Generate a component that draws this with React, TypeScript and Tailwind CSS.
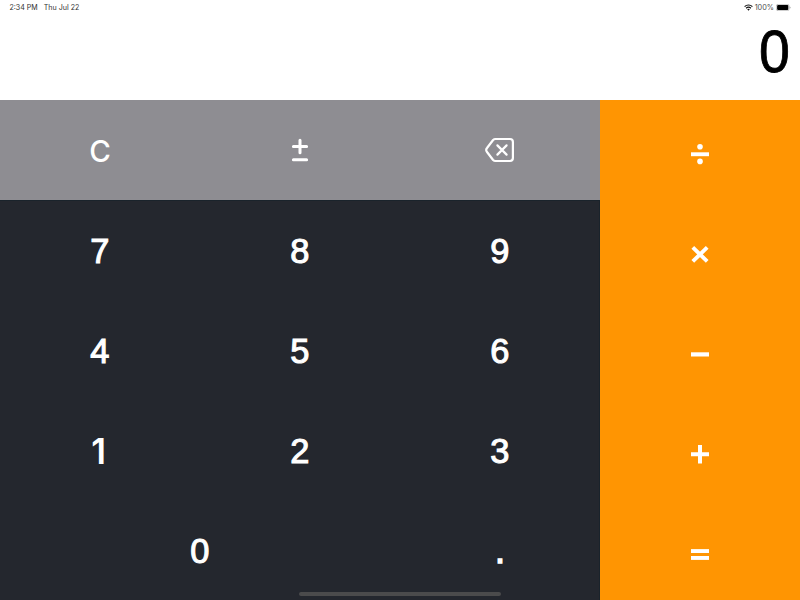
import type { ReactNode } from "react";

const FACES: Record<string, string> = {
  "1": "font-['Inter',sans-serif] text-[36px] font-semibold pt-px pr-[3px]",
  ".": "text-[35px] [-webkit-text-stroke:1.7px_white]",
};

function Digit({ label, wide = false }: { label: string; wide?: boolean }) {
  const face = FACES[label] ?? "pt-[3px] text-[35.5px] [-webkit-text-stroke:1.1px_white]";
  return (
    <button
      className={`flex h-[100px] items-center justify-center leading-none text-white ${face} ${wide ? "col-span-2" : ""}`}
    >
      <span className="inline-block scale-x-[0.97]">{label}</span>
    </button>
  );
}

function Operator({ label, children }: { label: string; children: ReactNode }) {
  return (
    <button aria-label={label} className="flex h-[100px] items-center justify-center pt-2">
      <svg width="24" height="24" viewBox="0 0 24 24" fill="white">
        {children}
      </svg>
    </button>
  );
}

function StatusBar() {
  return (
    <div className="flex h-[14px] items-center justify-between pr-[9px] pl-[9.5px] font-['Inter',sans-serif] text-[7.1px] leading-[14px] text-[#303030]">
      <div className="flex gap-[6px] pt-px">
        <span>2:34 PM</span>
        <span>Thu Jul 22</span>
      </div>
      <div className="flex items-center">
        <svg width="9" height="7" viewBox="0 0 9 7" fill="none" stroke="#111" strokeWidth="1.2">
          <path d="M.6 2.6a5.6 5.6 0 0 1 7.8 0M2.1 4.2a3.5 3.5 0 0 1 4.8 0" />
          <path d="M3.2 5.3a1.9 1.9 0 0 1 2.6 0L4.5 6.7Z" fill="#111" stroke="none" />
        </svg>
        <span className="ml-[2px] pt-px text-[7.3px] text-[#505050]">100%</span>
        <svg className="ml-[2px]" width="15" height="7" viewBox="0 0 15 7">
          <rect x=".3" y=".3" width="12.8" height="6.4" rx="1.8" fill="white" stroke="#999" strokeWidth=".6" />
          <rect x="1.1" y="1.1" width="11.2" height="4.8" rx="1" fill="black" />
          <path d="M13.7 2.4q.9.3.9 1.1t-.9 1.1Z" fill="#999" />
        </svg>
      </div>
    </div>
  );
}

export default function App() {
  return (
    <main className="relative h-[600px] w-[800px] overflow-hidden bg-white font-['Liberation_Sans',Arial,sans-serif]">
      <header className="h-[100px]">
        <StatusBar />
        <div className="flex h-[77px] items-center justify-end pr-[9px] text-[59px] leading-none text-black [-webkit-text-stroke:0.8px_black]">
          <span className="inline-block scale-x-[0.94]">0</span>
        </div>
      </header>
      <div className="flex h-[500px]">
        <div className="w-[600px]">
          <div className="grid h-[100px] grid-cols-3 bg-[#8e8d92] text-white">
            <button className="flex items-center justify-center pt-[3px] font-['Inter',sans-serif] text-[29.5px] leading-none font-medium">
              <span>C</span>
            </button>
            <button aria-label="Plus or minus" className="flex items-center justify-center">
              <svg width="24" height="28" viewBox="0 0 24 28" fill="none" stroke="white" strokeWidth="3" strokeLinecap="round">
                <path d="M5.4 10.5h13.2M12 4.2v12.6M5.4 23.7h13.2" />
              </svg>
            </button>
            <button aria-label="Delete" className="flex items-center justify-center">
              <svg width="32" height="28" viewBox="0 0 32 28" fill="none" stroke="white" strokeWidth="2.2" strokeLinecap="round" strokeLinejoin="round">
                <path d="M11.4 3H26q2.9 0 2.9 2.9v16.2Q28.9 25 26 25H11.4q-1.3 0-2.3-1L3 16Q1.4 14 3 12L9.1 4q1-1 2.3-1Z" />
                <path d="m13.4 9.4 9.2 9.2m0-9.2-9.2 9.2" />
              </svg>
            </button>
          </div>
          <div className="grid h-[400px] grid-cols-3 bg-[#24272e] shadow-[inset_-1px_1px_0_#1a232b]">
            <Digit label="7" />
            <Digit label="8" />
            <Digit label="9" />
            <Digit label="4" />
            <Digit label="5" />
            <Digit label="6" />
            <Digit label="1" />
            <Digit label="2" />
            <Digit label="3" />
            <Digit label="0" wide />
            <Digit label="." />
          </div>
        </div>
        <div className="grid w-[200px] grid-rows-5 bg-[#ff9502]">
          <Operator label="Divide">
            <rect x="3" y="10.3" width="18" height="3.9" />
            <circle cx="12" cy="4.8" r="2.8" />
            <circle cx="12" cy="19.4" r="2.8" />
          </Operator>
          <Operator label="Multiply">
            <path d="m4.8 5.4 14.4 14M19.2 5.4 4.8 19.4" stroke="white" strokeWidth="3.9" />
          </Operator>
          <Operator label="Subtract">
            <rect x="3" y="10.3" width="18" height="4.2" />
          </Operator>
          <Operator label="Add">
            <path d="M3 10.3h7V3h4v7.3h7v3.9h-7v7.3h-4v-7.3H3Z" />
          </Operator>
          <Operator label="Equals">
            <rect x="3" y="7.1" width="18" height="3.9" />
            <rect x="3" y="14" width="18" height="3.9" />
          </Operator>
        </div>
      </div>
      <div className="absolute top-[592px] left-[299px] h-[4px] w-[202px] rounded-full bg-[#4b4b4c]" />
    </main>
  );
}
